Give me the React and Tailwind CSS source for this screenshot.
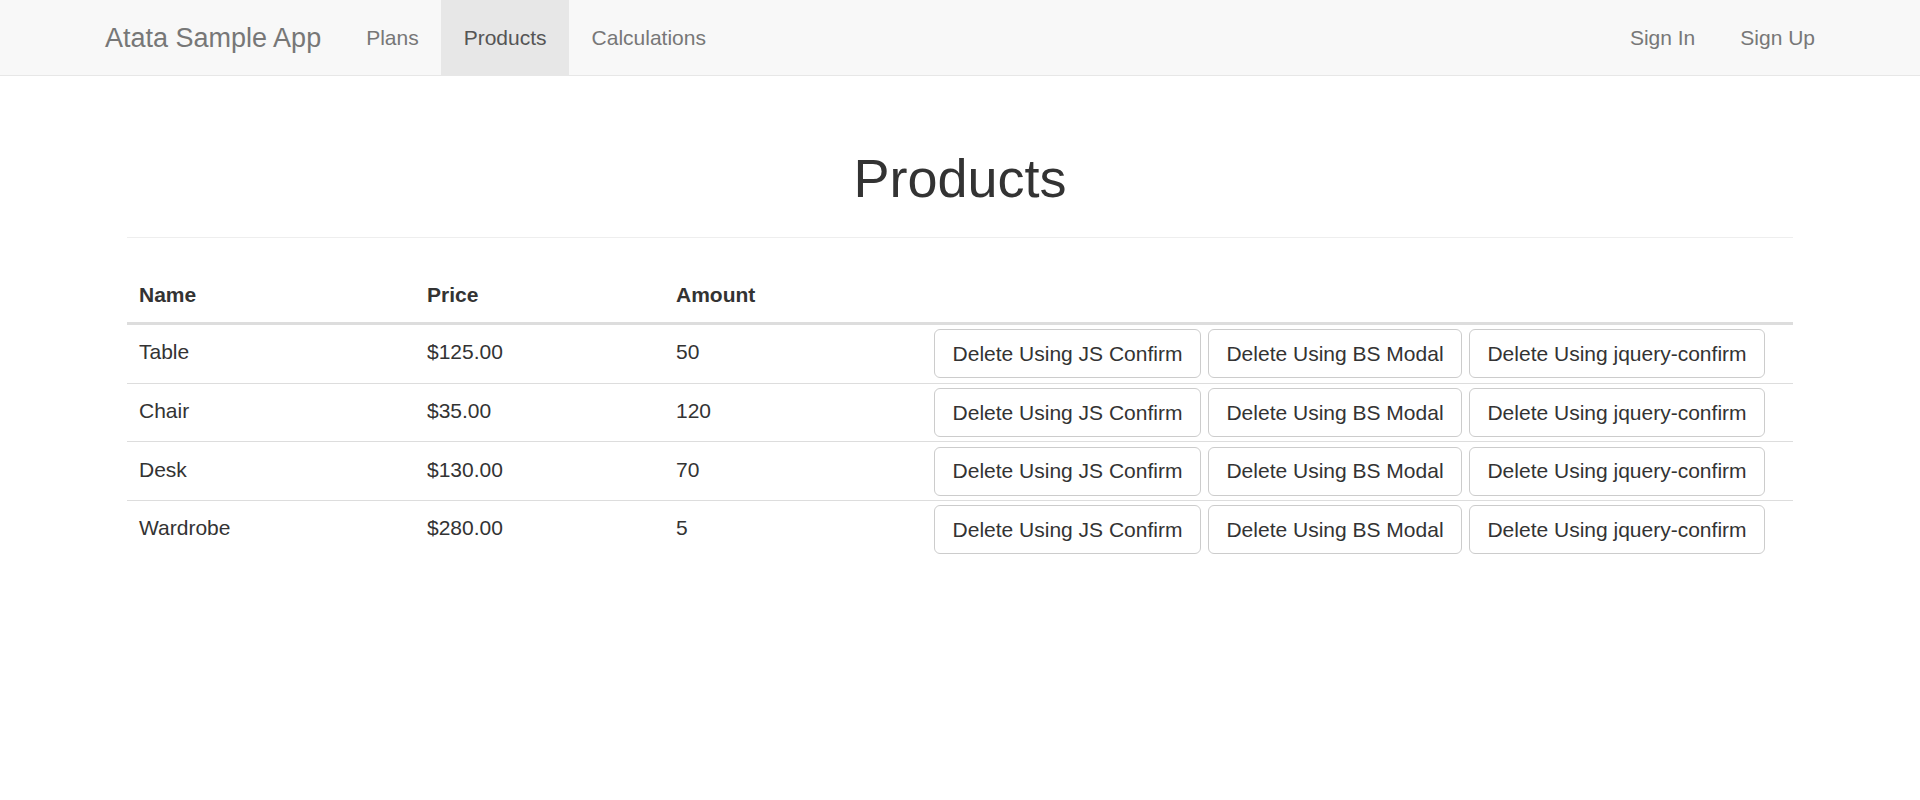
// App.jsx - Products page (Atata Sample App)

const navLinks = [
  { label: 'Plans', active: false },
  { label: 'Products', active: true },
  { label: 'Calculations', active: false },
];

const products = [
  { name: 'Table', price: '$125.00', amount: 50 },
  { name: 'Chair', price: '$35.00', amount: 120 },
  { name: 'Desk', price: '$130.00', amount: 70 },
  { name: 'Wardrobe', price: '$280.00', amount: 5 },
];

const Navbar = () => (
  <nav className="bg-[#f8f8f8] border-b border-[#e7e7e7]">
    <div className="mx-auto w-[1755px] px-[22.5px] flex items-stretch h-[75px]">
      <a href="#" className="-ml-[22.5px] px-[22.5px] flex items-center text-[27px] leading-[30px] text-[#777]">
        Atata Sample App
      </a>
      <ul className="flex">
        {navLinks.map((link) => (
          <li key={link.label}>
            <a
              href="#"
              className={
                link.active
                  ? 'h-[75px] px-[22.5px] flex items-center text-[21px] leading-[30px] text-[#555] bg-[#e7e7e7]'
                  : 'h-[75px] px-[22.5px] flex items-center text-[21px] leading-[30px] text-[#777]'
              }
            >
              {link.label}
            </a>
          </li>
        ))}
      </ul>
      <ul className="flex ml-auto -mr-[22.5px]">
        <li>
          <a href="#" className="h-[75px] px-[22.5px] flex items-center text-[21px] leading-[30px] text-[#777]">
            Sign In
          </a>
        </li>
        <li>
          <a href="#" className="h-[75px] px-[22.5px] flex items-center text-[21px] leading-[30px] text-[#777]">
            Sign Up
          </a>
        </li>
      </ul>
    </div>
  </nav>
);

const DeleteButtons = () => (
  <div className="flex gap-[7px] pt-[4.5px]">
    <button className="w-[267px] h-[49px] border border-[#ccc] rounded-[6px] bg-white text-[21px] text-[#333]">
      Delete Using JS Confirm
    </button>
    <button className="w-[254px] h-[49px] border border-[#ccc] rounded-[6px] bg-white text-[21px] text-[#333]">
      Delete Using BS Modal
    </button>
    <button className="w-[296px] h-[49px] border border-[#ccc] rounded-[6px] bg-white text-[21px] text-[#333]">
      Delete Using jquery-confirm
    </button>
  </div>
);

const App = () => {
  return (
    <div className="min-h-screen bg-white font-['Liberation_Sans',Arial,sans-serif] text-[#333]">
      <Navbar />

      <main className="mx-auto w-[1666px] pt-[73px]">
        {/* Encabezado */}
        <div className="pb-[13.5px] border-b border-[#eee] mb-[30px]">
          <h1 className="text-center text-[54px] leading-[1.1] font-normal mb-[15px]">Products</h1>
        </div>

        {/* Tabla de productos */}
        <div className="flex border-b-[3px] border-[#ddd] text-[21px] leading-[30px] font-bold">
          <div className="w-[288px] px-[12px] py-[12px]">Name</div>
          <div className="w-[249px] px-[12px] py-[12px]">Price</div>
          <div className="w-[258px] px-[12px] py-[12px]">Amount</div>
          <div className="flex-1" />
        </div>

        {products.map((p, i) => (
          <div
            key={p.name}
            className={i === 0 ? 'flex h-[58px] text-[21px] leading-[30px]' : 'flex h-[58.5px] border-t border-[#ddd] text-[21px] leading-[30px]'}
          >
            <div className="w-[288px] px-[12px] pt-[12.5px]">{p.name}</div>
            <div className="w-[249px] px-[12px] pt-[12.5px]">{p.price}</div>
            <div className="w-[258px] px-[12px] pt-[12.5px]">{p.amount}</div>
            <div className="flex-1 px-[12px]">
              <DeleteButtons />
            </div>
          </div>
        ))}
      </main>
    </div>
  );
};

export default App;
